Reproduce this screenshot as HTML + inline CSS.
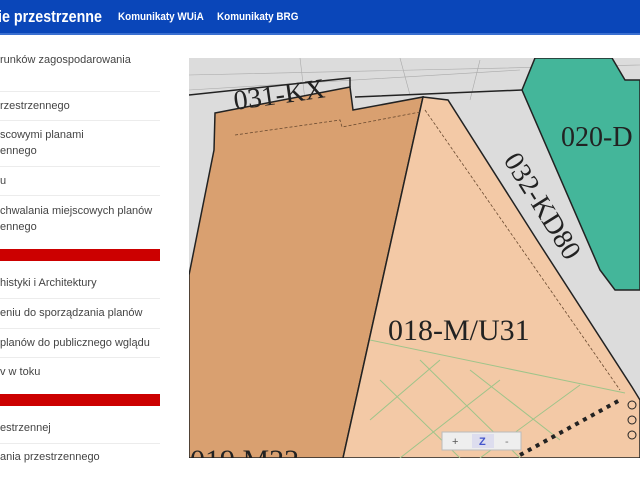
<!DOCTYPE html>
<html><head><meta charset="utf-8"><style>
body{margin:0;width:640px;height:480px;overflow:hidden;background:#fff;font-family:"Liberation Sans",sans-serif;position:relative}
.hd{position:absolute;left:0;top:0;width:640px;height:33px;background:#0a46b9;border-bottom:2px solid #3a6fd0}
.hd span{position:absolute;color:#fff;font-weight:bold;white-space:nowrap}
.t{position:absolute;left:0;font-size:11px;color:#444;white-space:nowrap}
.d{position:absolute;left:0;width:160px;height:1px;background:#ececec}
.r{position:absolute;left:0;width:160px;height:12px;background:#cc0000}
</style></head><body>
<div class="hd"><span style="left:-2px;top:7px;font-size:17px;transform:scaleX(0.84);transform-origin:0 0">ie przestrzenne</span><span style="left:118px;top:11px;font-size:11px;transform:scaleX(0.9);transform-origin:0 0">Komunikaty WUiA</span><span style="left:217px;top:11px;font-size:11px;transform:scaleX(0.9);transform-origin:0 0">Komunikaty BRG</span></div>
<div class="t" style="top:54px">runków zagospodarowania</div>
<div class="d" style="top:91px"></div>
<div class="t" style="top:100px">rzestrzennego</div>
<div class="d" style="top:120px"></div>
<div class="t" style="top:129px">scowymi planami</div>
<div class="t" style="top:145px">ennego</div>
<div class="d" style="top:166px"></div>
<div class="t" style="top:175px">u</div>
<div class="d" style="top:195px"></div>
<div class="t" style="top:205px">chwalania miejscowych planów</div>
<div class="t" style="top:221px">ennego</div>
<div class="r" style="top:249px"></div>
<div class="t" style="top:277px">histyki i Architektury</div>
<div class="d" style="top:298px"></div>
<div class="t" style="top:307px">eniu do sporządzania planów</div>
<div class="d" style="top:328px"></div>
<div class="t" style="top:337px">planów do publicznego wglądu</div>
<div class="d" style="top:357px"></div>
<div class="t" style="top:366px">v w toku</div>
<div class="r" style="top:394px"></div>
<div class="t" style="top:422px">estrzennej</div>
<div class="d" style="top:443px"></div>
<div class="t" style="top:451px">ania przestrzennego</div>
<svg style="position:absolute;left:189px;top:58px" width="451" height="400" viewBox="189 58 451 400">
<rect x="189" y="58" width="451" height="400" fill="#dcdcdc"/>
<g stroke="#aaa" stroke-width="0.6" fill="none"><path d="M189 75 L640 65 M189 90 L520 70 M300 58 L305 100 M400 58 L410 95 M480 60 L470 100 M540 100 L620 260 M560 120 L600 200"/></g>
<polygon points="215,113 350,87 353,110 423,97 343,458 189,458 189,275 214,150" fill="#d9a070" stroke="#222" stroke-width="1.5"/>
<polygon points="423,97 448,100 537,240 632,387 640,400 640,458 343,458" fill="#f3c9a6" stroke="#222" stroke-width="1.5"/>
<polygon points="535,58 612,58 625,80 640,80 640,290 615,290 600,270 522,90" fill="#44b69a" stroke="#222" stroke-width="1.5"/>
<path d="M189 95 L350 78 L350 87 M355 97 L522 90" stroke="#222" stroke-width="1.5" fill="none"/>
<path d="M235 135 L340 120 L342 127 L420 112 M425 110 L620 390" stroke="#6a4a30" stroke-width="0.8" stroke-dasharray="3 2" fill="none"/>
<g stroke="#9fc48a" stroke-width="1" fill="none"><path d="M370 340 L625 393 M380 380 L460 458 M420 360 L520 458 M470 370 L560 440 M370 420 L440 360 M400 458 L500 380 M480 458 L580 385"/></g>
<path d="M520 455 L620 400" stroke="#222" stroke-width="4" stroke-dasharray="4 5"/>
<g fill="none" stroke="#222"><circle cx="632" cy="405" r="4"/><circle cx="632" cy="420" r="4"/><circle cx="632" cy="435" r="4"/></g>
<g font-family="Liberation Serif,serif" fill="#222">
<text x="235" y="110" font-size="28" transform="rotate(-8 235 110)">031-KX</text>
<text x="561" y="146" font-size="28">020-D</text>
<text x="503" y="160" font-size="28" transform="rotate(58 503 160)">032-KD80</text>
<text x="388" y="340" font-size="30">018-M/U31</text>
<text x="190" y="470" font-size="30">019 M22</text>
</g>
<rect x="442" y="432" width="79" height="18" fill="#eee" stroke="#bbb"/>
<g font-size="11" font-family="Liberation Sans,sans-serif"><text x="452" y="445" fill="#555">+</text><rect x="472" y="434" width="22" height="14" fill="#dde"/><text x="479" y="445" fill="#4455cc" font-weight="bold">Z</text><text x="505" y="445" fill="#777">-</text></g>
</svg>
</body></html>
